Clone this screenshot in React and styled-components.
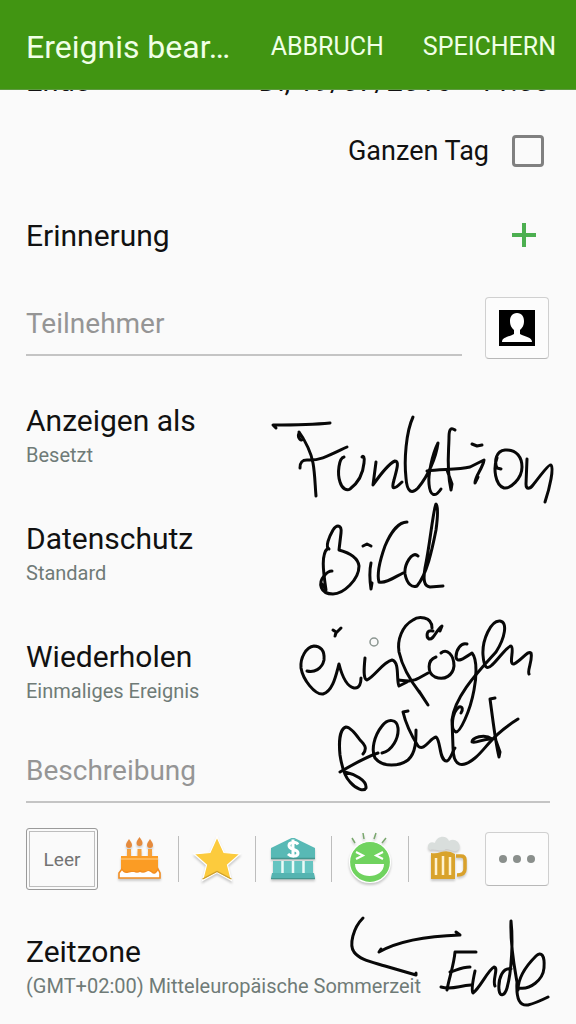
import React from "react";
import styled, { createGlobalStyle } from "styled-components";

const GlobalStyle = createGlobalStyle`
  * { box-sizing: border-box; }
  body { margin: 0; background: #fafafa; font-family: Roboto, "Liberation Sans", sans-serif; color: #111; }
  button, input { font: inherit; color: inherit; }
`;

const Screen = styled.div`
  position: relative;
  min-height: 100vh;
  overflow: hidden;
`;

const Header = styled.header`
  position: relative;
  z-index: 1;
  display: flex;
  align-items: center;
  gap: 39px;
  height: 90px;
  padding: 4px 20px 0 26px;
  background: #419512;
  border-bottom: 1px solid #5f9a42;
  color: #f0ffe6;
`;

const Title = styled.h1`
  flex: 1;
  margin: 0;
  white-space: nowrap;
  font-size: 32px;
  line-height: 40px;
  font-weight: 400;
`;

const HeaderButton = styled.button`
  padding: 0;
  border: 0;
  background: none;
  font-size: 25px;
  line-height: 40px;
`;

const Form = styled.main`
  padding: 0 26px 20px;
  font-size: 30px;
`;

const EndRow = styled.div`
  display: flex;
  gap: 26px;
  height: 36px;
  margin-top: -27px;
  font-size: 29px;
  line-height: 36px;
`;

const EndLabel = styled.span`
  flex: 1;
`;

const CheckRow = styled.label`
  display: flex;
  align-items: center;
  justify-content: flex-end;
  gap: 23px;
  height: 84px;
  margin-top: 10px;
  padding-right: 6px;
  font-size: 27px;
`;

const Checkbox = styled.input`
  appearance: none;
  width: 32px;
  height: 32px;
  margin: 0;
  border: 3px solid #808080;
  border-radius: 4px;
  background: #fafafa;
`;

const ReminderRow = styled.div`
  display: flex;
  align-items: center;
  justify-content: space-between;
  height: 84px;
  padding-right: 14px;
`;

const PlainButton = styled.button`
  display: flex;
  padding: 0;
  border: 0;
  background: none;
`;

const AttendeeRow = styled.div`
  display: flex;
  align-items: flex-start;
  gap: 23px;
  margin-top: 20px;
  padding-right: 1px;
`;

const TextField = styled.input`
  flex: 1;
  display: block;
  width: 100%;
  min-width: 0;
  height: 59px;
  padding: 0 0 4px;
  border: 0;
  border-bottom: 2px solid #c4c4c4;
  border-radius: 0;
  background: none;
  outline: 0;
  font-size: 28px;
  &::placeholder { color: #959595; opacity: 1; }
`;

const BoxButton = styled.button`
  display: flex;
  align-items: center;
  justify-content: center;
  width: 64px;
  height: ${(p) => p.$height}px;
  padding: 0;
  border: 1px solid #d0d0d0;
  border-bottom-color: #b8b8b8;
  border-radius: 4px;
  background: #fcfcfc;
`;

const Settings = styled.section`
  display: flex;
  flex-direction: column;
  gap: 50px;
  padding: 44px 0 37px;
`;

const SettingRow = styled.button`
  display: block;
  width: 100%;
  padding: 0;
  border: 0;
  background: none;
  text-align: left;
`;

const SettingName = styled.span`
  display: block;
  line-height: 36px;
`;

const SettingValue = styled.span`
  display: block;
  font-size: 20px;
  line-height: 32px;
  color: #6f7b77;
`;

const StickerBar = styled.div`
  display: flex;
  align-items: center;
  height: 62px;
  margin: 25px 0 44px;
  padding-right: 1px;
`;

const EmptyButton = styled.button`
  width: 72px;
  height: 62px;
  margin-right: 4px;
  padding: 0;
  border: 1px solid #9a9a9a;
  border-radius: 3px;
  background: #fafafa;
  box-shadow: inset 0 0 0 2px #fafafa, inset 0 0 0 3px #bdbdbd;
  font-size: 19px;
  color: #737373;
`;

const StickerButton = styled.button`
  flex: 1;
  display: flex;
  align-items: center;
  justify-content: center;
  height: 46px;
  padding: 0;
  border: 0;
  border-right: ${(p) => (p.$last ? "0" : "1px solid #bdbdbd")};
  background: none;
  svg { flex: none; overflow: visible; filter: drop-shadow(0 2px 1px rgba(0, 0, 0, 0.2)); }
`;

const Ink = styled.svg`
  position: absolute;
  top: 0;
  right: 0;
  pointer-events: none;
`;

const Cake = () => (
  <svg width="46" height="46" viewBox="0 0 46 46">
    {[12, 22.5, 33].map((x, i) => (
      <g key={x}>
        <path d={`M${x} ${i === 1 ? 1 : 3}c-2 3-3 4-3 6a3 3 0 0 0 6 0c0-2-1-3-3-6z`} fill="#e58a3c" />
        <rect x={x - 2} y="13" width="4" height="7" fill="#f7a13a" />
      </g>
    ))}
    <path d="M4 20h37v18H4z" fill="#fb9c24" />
    <path d="M4 23h37" stroke="#ffc169" strokeWidth="1.5" />
    <path d="M2 42v-5l3-4q2 4 6 3t6-1q3 2 6 0q3 2 6 0t6 1t6-3l2 4v5z" fill="#fff" stroke="#f28d20" strokeWidth="1.6" />
    <path d="M5 32h35l-2 3-5-1-4 1-6-1-6 1-6-1-4 1z" fill="#fb9c24" />
  </svg>
);

const Star = () => (
  <svg width="50" height="46" viewBox="0 0 50 46">
    <path d="M25 1l7 15.500 16 1.500-12.500 11 4 15.500L25 36.500 10.500 44.500l4-15.500L2 18l16-1.500z" fill="#fccb3d" stroke="#fff" strokeWidth="1.200" />
    <path d="M10.500 43L25 35.500 39.500 43" fill="none" stroke="#cda02f" strokeWidth="1.200" />
  </svg>
);

const Bank = () => (
  <svg width="46" height="46" viewBox="0 0 46 46">
    <path d="M1 12L21.500 2h3L45 12v10H1z" fill="#58b9b5" />
    <path d="M1 22.500h44M1 42.500h44" stroke="#45968f" strokeWidth="1.500" />
    <path d="M3 25h40v12H3z" fill="#65c4c1" />
    <path d="M2 37h42l1 5H1z" fill="#55b4b1" />
    <path d="M12.500 25v12M23 25v12M33.500 25v12" stroke="#e9faf8" strokeWidth="2.500" />
    <path d="M28 8.500c-2-3-9-3-9 1 0 5 9 3 9 7.500 0 4-7 4-10 1M23 3.500v18" fill="none" stroke="#fff" strokeWidth="3" />
  </svg>
);

const Smiley = () => (
  <svg width="46" height="54" viewBox="0 0 46 54">
    <path d="M8 11L5 6M17 7l-1-6M27 7l2-6M35 11l4-5" stroke="#79a76d" strokeWidth="1.500" />
    <circle cx="23" cy="30" r="20.500" fill="#70d35f" stroke="#fff" strokeWidth="1.200" />
    <path d="M9 20l7 3.500-7 3.500M36 20l-7 3.500 7 3.500" fill="none" stroke="#fff" strokeWidth="2" />
    <path d="M8 32h29c0 16-29 16-29 0z" fill="#fff" />
  </svg>
);

const Beer = () => (
  <svg width="42" height="46" viewBox="0 0 42 46">
    <path d="M30 20h5q4 0 4 4v9q0 6-8 6" fill="none" stroke="#d9a12b" strokeWidth="3.500" />
    <path d="M5 17q5 1 10-1q8-2 14 2v25H5z" fill="#d9a32c" />
    <path d="M10 22v17M17 20v19M24 21v18" stroke="#fff2cf" strokeWidth="2.500" />
    <path d="M4 14c-5-4 0-10 5-7 2-8 12-8 14-2 6-4 13 3 10 8-4 5-9 0-13 0-5 4-10-1-16 1z" fill="#d9dedc" />
  </svg>
);

const stickers = [
  ["Kuchen", Cake],
  ["Stern", Star],
  ["Bank", Bank],
  ["Lachen", Smiley],
  ["Bier", Beer],
];

const settings = [
  ["Anzeigen als", "Besetzt"],
  ["Datenschutz", "Standard"],
  ["Wiederholen", "Einmaliges Ereignis"],
];

const strokes = [
  "M276 428L273 425C290 425 310 425 330 423",
  "M299 433C297 438 302 443 303 438L299 432C306 442 311 452 313 463C315 474 315 485 316 496",
  "M300 468C300 461 303 460 307 460C320 461 330 455 347 447",
  "M344 457C339 458 337 473 340 482C342 489 347 491 350 489C358 483 363 474 364 463C365 457 363 455 362 457",
  "M376 462L373 485C380 475 388 464 395 461C400 461 396 472 394 480C391 490 394 490 402 482",
  "M413 417C406 432 404 460 406 478C407 493 412 494 418 488C428 476 436 458 438 443C432 455 428 475 429 484C430 496 435 498 441 489",
  "M427 471C440 469 458 470 470 467L484 460C483 468 475 476 475 483L478 477",
  "M455 430C451 427 449 429 449 437C449 450 446 468 451 490L452 484L447 470",
  "M472 444L477 446L482 445",
  "M501 469L497 468C494 461 496 451 505 450C517 449 522 458 522 467C522 479 510 489 504 488C495 485 493 468 497 458",
  "M527 459L526 484C526 490 530 489 533 485C540 476 549 464 551 465C554 468 550 487 545 502",
  "M329 549C325 547 329 537 333 530C337 524 342 525 341 533L339 550C350 553 358 558 359 566C359 580 343 594 333 594C320 594 318 583 324 576C327 572 330 571 332 571",
  "M328 548C321 554 323 570 326 590L322 584",
  "M371 563C369 572 370 582 371 589L372 583",
  "M363 546L367 544L371 546",
  "M407 522C398 522 390 534 385 546C380 560 377 575 379 582C385 584 395 577 403 573",
  "M418 556C412 550 404 565 405 574C407 584 412 588 417 586C427 574 432 550 436 530C438 515 438 506 436 504C433 510 430 545 425 568C423 580 424 586 430 587L443 586",
  "M307 671C314 673 322 669 324 660C325 650 320 646 314 646C306 647 300 658 301 668C303 680 315 695 323 694C333 691 336 675 339 664C341 672 345 686 354 688C360 689 361 682 361 678",
  "M365 658C364 668 363 679 367 680C375 676 383 662 392 660C400 662 396 680 399 686L407 682",
  "M399 680C407 681 413 682 419 678L428 673",
  "M333 630L336 632L335 636L336 633L341 628",
  "M432 628C432 616 418 616 413 620C402 626 397 640 399 652C403 670 413 684 420 693L428 705L419 691",
  "M433 631C426 629 426 637 429 639C434 640 436 630 442 626L440 631",
  "M436 657C427 660 427 673 435 677C445 681 453 675 454 666C454 655 447 648 441 653",
  "M467 644C461 642 456 650 456 657C457 664 466 657 472 653C478 660 476 680 474 690C470 712 460 732 456 732C450 730 452 712 459 707C463 706 463 710 461 713",
  "M529 674C527 670 533 660 531 653C528 650 522 660 514 664C508 665 515 648 511 646C507 646 498 660 492 665C487 670 484 668 483 655C482 640 491 620 500 621C508 622 505 638 496 652C480 670 455 695 452 720L453 747C453 768 463 768 475 758C485 750 492 735 518 719",
  "M363 754C368 748 364 744 360 740C355 733 350 727 346 727C339 729 339 745 340 755C342 768 345 777 350 782C356 789 364 792 366 788C367 780 354 774 345 772",
  "M340 772C352 765 366 757 378 753",
  "M382 753C392 751 399 738 398 728C397 719 388 718 382 726C374 736 371 750 375 758C383 768 400 766 408 760C416 753 416 740 416 730",
  "M408 711L403 712C406 725 413 738 418 746C424 752 430 738 436 737C441 740 439 762 447 761C451 759 453 750 455 748",
  "M495 698L490 699C493 720 495 740 499 757L500 752L495 738",
  "M492 739C484 733 472 738 472 742C476 744 484 738 492 739",
  "M363 918C353 928 349 945 354 952C360 960 372 962 385 966L416 975L416 973",
  "M381 949L379 952C400 940 430 936 460 935L456 932",
  "M476 952L455 952C454 965 449 978 447 990L448 985",
  "M441 987C452 990 458 986 471 985",
  "M450 972C457 970 462 967 470 967",
  "M475 971C473 980 471 990 473 993C480 988 488 970 494 967C499 968 492 980 495 986",
  "M511 969C503 967 498 978 499 990C500 998 505 995 507 988C512 970 513 940 511 921C510 945 514 965 517 982C516 1000 520 1006 528 1005C536 1003 542 1000 548 997",
  "M519 988C530 990 543 980 544 968C545 955 541 951 536 956C528 964 518 976 518 990",
];

export default function App() {
  return (
    <Screen>
      <GlobalStyle />
      <Header>
        <Title>Ereignis bear…</Title>
        <HeaderButton>ABBRUCH</HeaderButton>
        <HeaderButton>SPEICHERN</HeaderButton>
      </Header>
      <Form>
        <EndRow>
          <EndLabel>Ende</EndLabel>
          <span>Di, 19/07/2016</span>
          <span>11:00</span>
        </EndRow>
        <CheckRow>
          Ganzen Tag
          <Checkbox type="checkbox" />
        </CheckRow>
        <ReminderRow>
          <span>Erinnerung</span>
          <PlainButton aria-label="Erinnerung hinzufügen">
            <svg width="24" height="24" viewBox="0 0 24 24">
              <path d="M12 0v24M0 12h24" stroke="#4caf50" strokeWidth="4" />
            </svg>
          </PlainButton>
        </ReminderRow>
        <AttendeeRow>
          <TextField aria-label="Teilnehmer" placeholder="Teilnehmer" />
          <BoxButton $height={62} aria-label="Kontakt wählen">
            <svg width="36" height="36" viewBox="0 0 36 36">
              <path d="M0 0h36v36H0z" fill="#000" />
              <path d="M18 3c-5 0-7 4-7 8 0 5 2 7 4 9v4c-5 3-12 3-12 8h30c0-5-7-5-12-8v-4c2-2 4-4 4-9 0-4-2-8-7-8z" fill="#fff" />
            </svg>
          </BoxButton>
        </AttendeeRow>
        <Settings>
          {settings.map(([name, value]) => (
            <SettingRow key={name}>
              <SettingName>{name}</SettingName>
              <SettingValue>{value}</SettingValue>
            </SettingRow>
          ))}
        </Settings>
        <TextField aria-label="Beschreibung" placeholder="Beschreibung" />
        <StickerBar>
          <EmptyButton>Leer</EmptyButton>
          {stickers.map(([name, Icon], i) => (
            <StickerButton key={name} aria-label={name} $last={i === stickers.length - 1}>
              <Icon />
            </StickerButton>
          ))}
          <BoxButton $height={54} aria-label="Mehr">
            <svg width="36" height="8" viewBox="0 0 36 8" fill="#8a8f8c">
              <circle cx="4" cy="4" r="4" />
              <circle cx="18" cy="4" r="4" />
              <circle cx="32" cy="4" r="4" />
            </svg>
          </BoxButton>
        </StickerBar>
        <SettingRow>
          <SettingName>Zeitzone</SettingName>
          <SettingValue>(GMT+02:00) Mitteleuropäische Sommerzeit</SettingValue>
        </SettingRow>
      </Form>
      <Ink width="576" height="1024" viewBox="0 0 576 1024" fill="none" aria-hidden="true">
        <g stroke="#080808" strokeWidth="3" strokeLinecap="round" strokeLinejoin="round">
          {strokes.map((d) => (
            <path key={d} d={d} />
          ))}
        </g>
        <circle cx="374" cy="642" r="4" stroke="#8b9691" strokeWidth="1.500" />
      </Ink>
    </Screen>
  );
}
